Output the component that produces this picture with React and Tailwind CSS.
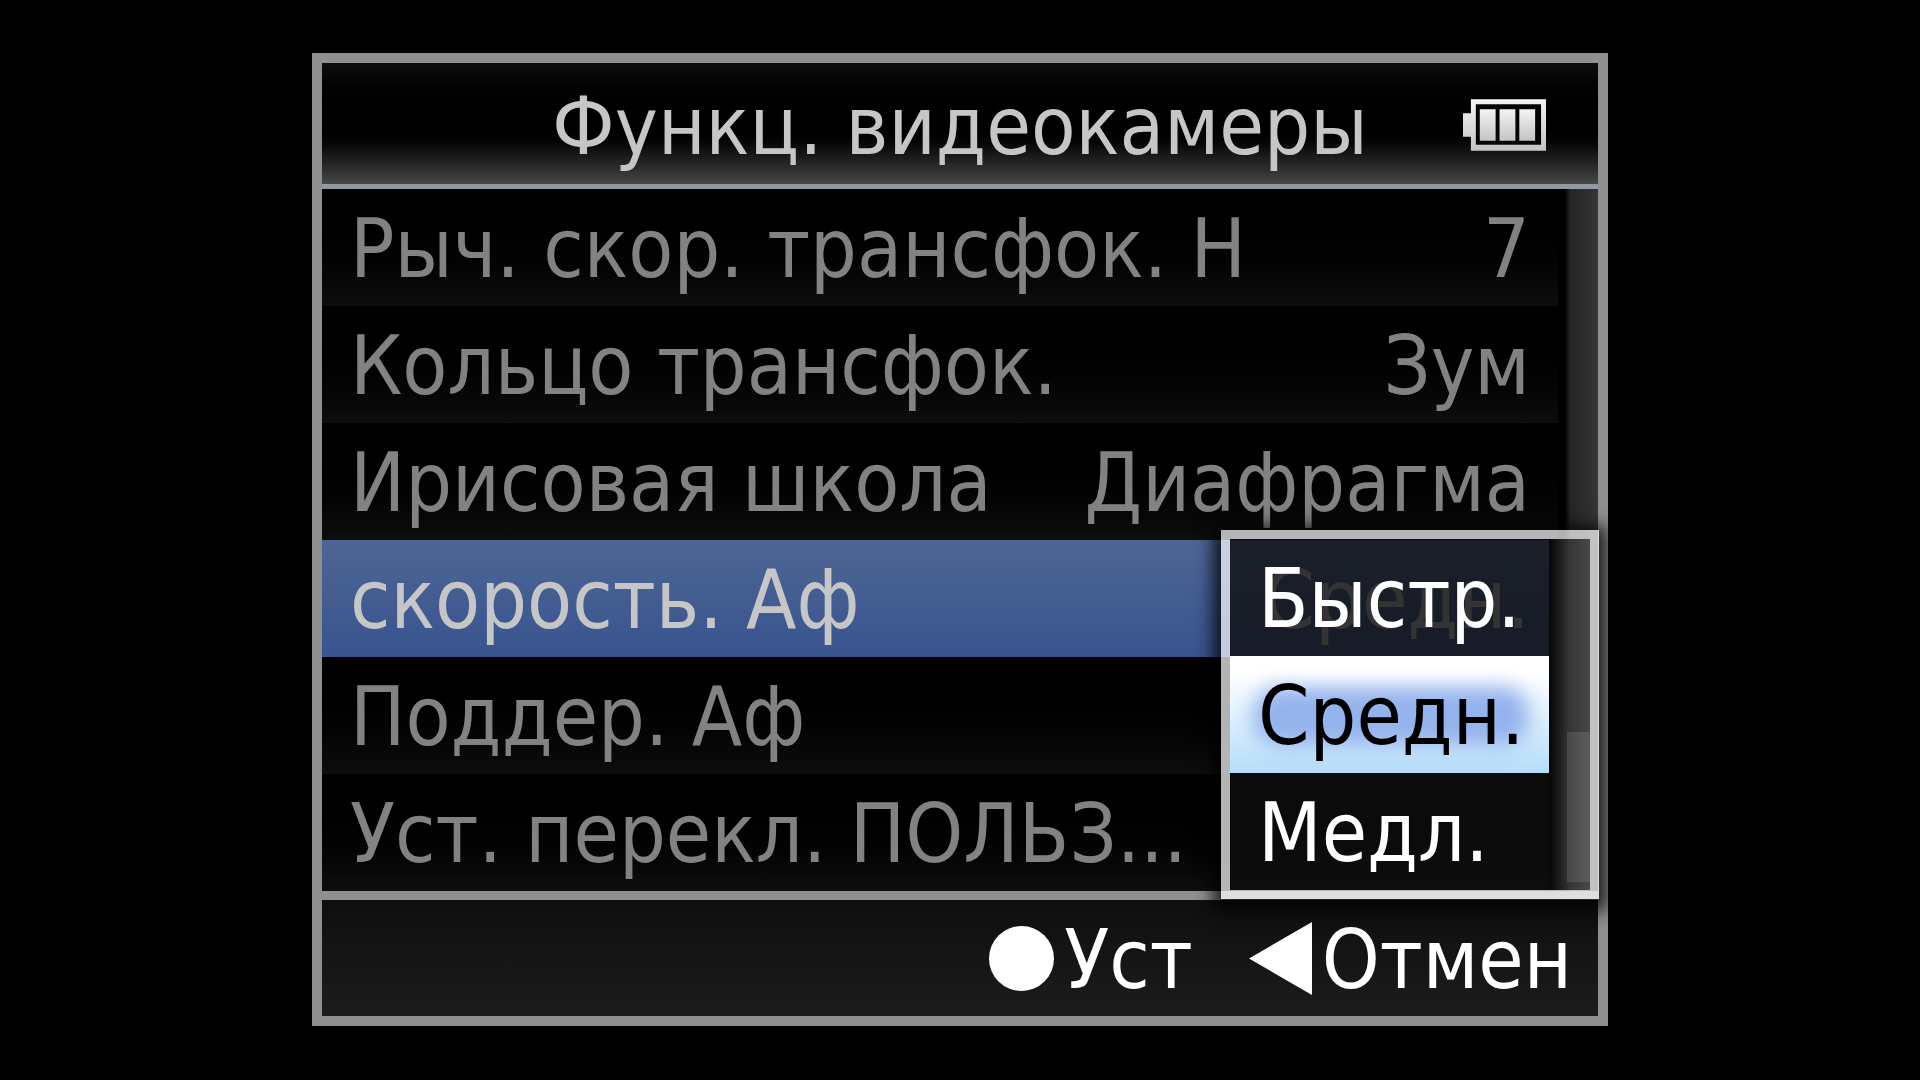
const rows = [
  { label: 'Рыч. скор. трансфок. Н', value: '7' },
  { label: 'Кольцо трансфок.', value: 'Зум' },
  { label: 'Ирисовая школа', value: 'Диафрагма' },
  { label: 'скорость. Аф', value: 'Средн.', active: true },
  { label: 'Поддер. Аф', value: '' },
  { label: 'Уст. перекл. ПОЛЬЗ...', value: '' },
];

const options = [
  { label: 'Быстр.' },
  { label: 'Средн.', selected: true },
  { label: 'Медл.' },
];

function Battery() {
  return (
    <svg className="h-[52px] w-[83px]" viewBox="0 0 84 52" role="img" aria-label="Battery">
      <defs>
        <linearGradient id="cell" x1="0" y1="0" x2="0" y2="1">
          <stop offset="0" stopColor="#f4f4f4" />
          <stop offset="1" stopColor="#c4c4c4" />
        </linearGradient>
      </defs>
      <path d="M0 14h8V0h76v52H8V38H0z" fill="url(#cell)" />
      <path d="M13 5h66v41H13z" fill="#050505" />
      <path d="M17 10h16v32H17zM37 10h16v32H37zM57 10h16v32H57z" fill="url(#cell)" />
    </svg>
  );
}

function MenuRow({ label, value, active }) {
  return (
    <button
      type="button"
      className={`flex h-[117px] w-full items-center justify-between pt-[3px] pr-[28px] pl-[28px] whitespace-nowrap ${
        active
          ? 'bg-linear-to-b from-[#4e6694] to-[#38548f] text-[#c6c6c6]'
          : 'bg-linear-to-b from-black to-[#0e0e0e] text-[#828282]'
      }`}
    >
      <span>{label}</span>
      <span>{value}</span>
    </button>
  );
}

function SpeedPopup() {
  return (
    <div
      role="listbox"
      aria-label="скорость. Аф"
      className="absolute -right-px -bottom-[8px] flex w-[378px] border-[9px] border-white/70 bg-[#0e0e0e]/80 bg-clip-padding text-white shadow-[0_4px_16px_8px_rgba(0,0,0,0.8)]"
    >
      <div className="flex-1">
        {options.map((option) => (
          <button
            key={option.label}
            type="button"
            role="option"
            aria-selected={Boolean(option.selected)}
            className={`flex h-[117px] w-full items-center pt-[3px] pl-[28px] whitespace-nowrap ${
              option.selected
                ? 'bg-linear-to-b from-white from-15% to-[#b4ddfa] text-black'
                : ''
            }`}
          >
            {option.selected ? (
              <span className="relative">
                <span className="absolute -inset-x-1 inset-y-[12px] rounded-3xl bg-[#94b2ec] blur-[10px]" />
                <span className="relative">{option.label}</span>
              </span>
            ) : (
              option.label
            )}
          </button>
        ))}
      </div>
      <div className="flex w-[41px] flex-col justify-end bg-linear-to-r from-[#060606] via-[#363636] to-[#484848] pb-2">
        <div className="ml-[18px] h-[150px] bg-linear-to-r from-[#484848] to-[#5c5c5c]" />
      </div>
    </div>
  );
}

export default function App() {
  return (
    <div className="min-h-screen bg-black py-[53px] font-['DejaVu_Sans_Condensed','DejaVu_Sans',sans-serif] text-[82px] leading-none">
      <main className="mx-auto w-[67.5%] border-[10px] border-[#8f8f8f]">
        <header className="grid h-[126px] grid-cols-[1fr_auto_1fr] items-center border-b-[5px] border-[#9298a4] bg-linear-to-b from-[#0e0e0e] via-black via-50% to-[#484848] pt-[3px]">
          <span />
          <h1 className="pt-[3px] text-[81px] whitespace-nowrap text-[#c6c6c6]">Функц. видеокамеры</h1>
          <div className="justify-self-end pr-[52px]">
            <Battery />
          </div>
        </header>

        <section className="relative flex border-b-[9px] border-[#8f8f8f]">
          <div className="flex-1">
            {rows.map((row) => (
              <MenuRow key={row.label} {...row} />
            ))}
          </div>
          <div className="w-[40px] bg-linear-to-r from-black from-10% via-[#242424] via-30% to-[#363636]" />
          <SpeedPopup />
        </section>

        <footer className="flex h-[116px] items-center justify-end gap-[56px] bg-linear-to-b from-[#0f0f0f] to-[#1c1c1c] pr-[26px] text-white">
          <button type="button" className="flex items-center gap-[10px]">
            <span className="size-[65px] rounded-full bg-white" />
            <span className="pt-[3px]">Уст</span>
          </button>
          <button type="button" className="flex items-center gap-[10px]">
            <svg className="h-[73px] w-[63px]" viewBox="0 0 64 74" aria-hidden="true">
              <path d="M0 37 64 0v74z" fill="#fff" />
            </svg>
            <span className="pt-[3px]">Отмен</span>
          </button>
        </footer>
      </main>
    </div>
  );
}
